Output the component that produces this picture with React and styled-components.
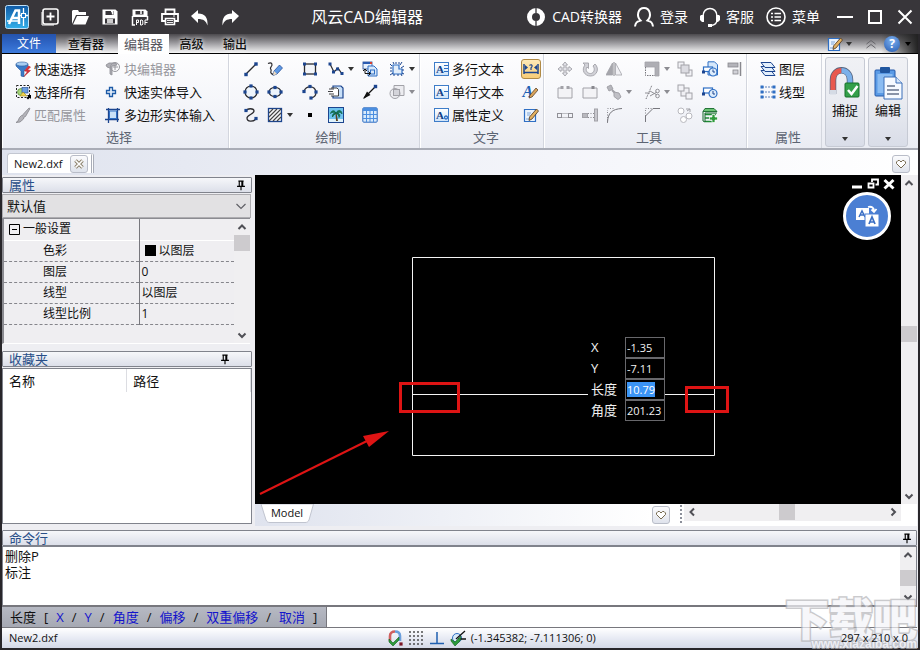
import React, { useEffect, useRef } from "react";
import styled, { createGlobalStyle } from "styled-components";

const GlobalStyle = createGlobalStyle`
  * {
    box-sizing: border-box;
  }
  body {
    margin: 0;
    background: #28262a;
    font-family: "Open Sans", "Noto Sans CJK SC", sans-serif;
    font-size: 13px;
    line-height: 16px;
    color: #111;
  }
  button,
  input,
  select {
    font: inherit;
    color: inherit;
    margin: 0;
    padding: 0;
    border: 0;
    background: none;
    border-radius: 0;
  }
  button {
    white-space: nowrap;
  }
  svg {
    display: block;
    flex: none;
  }
`;

/* ---------- icons ---------- */

const NAVY = "#1c458f";
const BLUE = "#2f6fc4";
const PALE = "#c9e0f8";
const INK = "#2c2c30";
const GREY = "#a2a2a8";
const MIST = "#e2e2e8";

const Glyph = ({ size = 16, box = 16, children }) => (
  <svg width={size} height={size} viewBox={`0 0 ${box} ${box}`} fill="none" aria-hidden="true">
    {children}
  </svg>
);

const Dots = ({ at, color = NAVY, r = 1.5 }) =>
  at.map(([x, y]) => (
    <rect key={`${x}-${y}`} x={x - r} y={y - r} width={r * 2} height={r * 2} fill={color} />
  ));

const ICONS = {
  funnel: (
    <>
      <path d="M1 3v2l5 5v5l3 1V10l4-5V3z" fill="#3a7ac8" stroke="#285a9c" strokeWidth=".6" />
      <ellipse cx="7" cy="3" rx="6" ry="2" fill="#a8cdf2" stroke="#285a9c" strokeWidth=".6" />
      <path d="M13.500 5l-4 5 3 .5L9 15.500l6.500-6-3-.5L15.500 6z" fill="#e0303a" stroke="#a8121c" strokeWidth=".5" />
    </>
  ),
  selectAll: (
    <>
      <rect x="1.500" y="1.500" width="13" height="12" stroke="#222" strokeDasharray="2 1.500" />
      <circle cx="6" cy="8" r="3.500" fill="#a8d47c" stroke="#3f7a1e" strokeWidth=".6" />
      <rect x="7" y="3.500" width="6" height="5.500" fill="#6b9fe0" stroke="#1c458f" strokeWidth=".6" />
      <path d="M5 12l3-4 4 4z" fill="#f2d54e" stroke="#a08a1a" strokeWidth=".6" />
      <path d="M12 11h4v4l-1.200-1.200L13 15.500 11.500 14l1.700-1.700z" fill="#000" />
    </>
  ),
  brush: (
    <path d="M15 1.500l-1-.5-6 6.500-.5 1.500-1-.5-2 2L3 14l-2 1.500 4-.5 3.500-3 .5-2 1.500-.5z" fill="#b4b4ba" stroke="#85858b" strokeWidth=".8" />
  ),
  blockEdit: (
    <>
      <path d="M1 4l3-2h7l1 2-5 1v9l-2-1V7L2 6z" fill="#b0b0b6" stroke="#8c8c92" strokeWidth=".8" />
      <circle cx="10" cy="6" r="4.500" stroke="#98989e" />
      <path d="M10 4v5M8 6h5" stroke="#98989e" />
    </>
  ),
  plus: (
    <path d="M4.500 3.500H7.500v3h3v3h-3v3h-3v-3h-3v-3h3z" fill="#e4effb" stroke="#1c5aa6" strokeWidth="1.300" />
  ),
  polygonImport: (
    <>
      <path d="M3.500 1v15M0 12.500h14M12.500 15V1M1 2.500h14" stroke={NAVY} strokeWidth="1.300" />
      <rect x="4.500" y="4" width="7" height="7.500" fill={PALE} stroke={BLUE} />
    </>
  ),
  line: (
    <>
      <path d="M3 13L13 3" stroke={INK} strokeWidth="1.300" />
      <Dots at={[[3, 13.5], [13, 3]]} r={1.7} />
    </>
  ),
  sketch: (
    <>
      <path d="M1 2.500c4-2 5 1 3 3.500-2 2 1 2 0 4-1 2 1 3.500 3 3.500" stroke={INK} strokeWidth="1.200" />
      <path d="M12.500 4l3 3-5.500 6-4 1.500L7 10z" fill="#5d98e4" stroke={NAVY} strokeWidth=".7" />
      <path d="M7 10l3 3-4 1.500z" fill="#f0dcc0" />
    </>
  ),
  rect: (
    <>
      <rect x="2.500" y="3" width="11" height="10" fill="#f2f5fa" stroke={INK} strokeWidth="1.300" />
      <Dots at={[[2.5, 3], [13.5, 3], [2.5, 13], [13.5, 13]]} />
    </>
  ),
  polyline: (
    <>
      <path d="M2 3l4 8 4-4 4 6" stroke={INK} strokeWidth="1.200" />
      <Dots at={[[2, 3], [5.5, 11], [9.5, 8], [14, 12.5]]} />
    </>
  ),
  insertBlock: (
    <>
      <rect x="1" y="1" width="9" height="7" fill="#e6f0fb" stroke={NAVY} strokeWidth=".8" />
      <path d="M1 2h9" stroke="#2a5ab0" strokeWidth="2" />
      <path d="M8 2h2" stroke="#d8402f" strokeWidth="2" />
      <path d="M6 5h6l3 3v7H6z" fill="#d8e8fa" stroke={BLUE} />
      <rect x="8.500" y="9" width="4" height="4" stroke={BLUE} />
      <path d="M3 9v3.500h5M1 10l2-2 2 2M6.500 10.500l2 2-2 2" stroke="#111" />
    </>
  ),
  boundary: (
    <>
      <path d="M4 4h6v4h3v5H4z" fill="#e3eefa" stroke={BLUE} strokeWidth="1.200" />
      <path d="M1 3l2 2M4 1l1 2M7 1v2M10 1v2M13 1l-2 3M15 5l-3 2M15 9h-2M15 13l-2-1M13 15l-1-2M9 15v-2M5 15v-2M1 14l3-2M1 10h2M1 7h2" stroke={NAVY} />
    </>
  ),
  circle: (
    <>
      <circle cx="8" cy="8" r="6" fill="#edf4fc" stroke={INK} strokeWidth="1.200" />
      <Dots at={[[8, 2], [8, 14], [2, 8], [14, 8]]} r={1.6} />
    </>
  ),
  ellipse: (
    <>
      <ellipse cx="8" cy="8" rx="6" ry="4.500" fill="#edf4fc" stroke={INK} strokeWidth="1.200" />
      <Dots at={[[8, 3.5], [8, 12.5], [2, 8], [14, 8]]} r={1.6} />
    </>
  ),
  arc: (
    <>
      <path d="M2 7.500C4 1 13 1.500 14 8c0 3-2 5.500-5 6" stroke={INK} strokeWidth="1.200" />
      <Dots at={[[2, 7.5], [8, 2.5], [14, 8], [9, 14]]} r={1.6} />
    </>
  ),
  copyPage: (
    <>
      <path d="M5 2h8l2 2v10H5z" fill={PALE} stroke={NAVY} strokeWidth="1.200" />
      <path d="M3 4h6l1.500 1.500V12H3" fill="#fff" stroke={INK} strokeWidth=".9" />
      <path d="M1 5h5M0 7.500h5M1 10h5" stroke={INK} strokeWidth=".9" />
    </>
  ),
  arrowLine: (
    <>
      <path d="M2 14L13 3" stroke="#111" strokeWidth="1.300" />
      <path d="M1 15l4-7.500 3.500 3.500z" fill="#111" />
      <Dots at={[[13.5, 2.5]]} r={1.7} />
    </>
  ),
  maskGrey: (
    <>
      <path d="M5 1.500h10v10H5z" fill="#ececf0" stroke={GREY} />
      <circle cx="6" cy="9.500" r="5" fill="#ececf0" stroke={GREY} />
      <rect x="4.500" y="5.500" width="6" height="6" fill="#d4d4da" stroke={GREY} />
    </>
  ),
  spline: (
    <>
      <path d="M3 4c1-3 8-3 8 0 0 3-7 4-7 7 0 4 6 4 9 1" stroke={INK} strokeWidth="1.300" />
      <Dots at={[[3, 3.5], [13, 11.5]]} r={1.6} />
    </>
  ),
  hatch: (
    <>
      <rect x="1.500" y="1.500" width="13" height="13" fill="#f8f8f8" stroke={NAVY} strokeWidth="1.300" />
      <path d="M2 6l4-4M2 10l8-8M2 14L14 2M6 14l8-8M10 14l4-4" stroke="#444" strokeWidth="1.100" />
    </>
  ),
  point: <rect x="6" y="6" width="4" height="4" fill="#000" />,
  picture: (
    <>
      <rect x=".5" y=".5" width="15" height="15" fill="#6fc3ee" stroke={NAVY} />
      <path d="M1 12h14v3H1z" fill="#dff2fb" />
      <path d="M7.500 6L8 14h2L8.500 6z" fill="#5b4220" />
      <path d="M8 6C6 2 3 4 2.500 6.500 4 5 6 5 8 6 5 6 4 8 4.500 10 5.500 8 7 7 8 6.500c2 .5 3 2 3 4C13 8 11 6 9 6c2-1 4-1 5 1C14 3 10 2 8 6z" fill="#147a55" stroke="#0b5c40" strokeWidth=".7" />
    </>
  ),
  table: (
    <>
      <rect x=".8" y=".8" width="14.400" height="14.400" rx="1" fill="#d8eafb" stroke="#2c6bc0" />
      <path d="M1 1h14v3H1z" fill="#4b8ee0" />
      <path d="M1 7.500h14M1 11.500h14M4.500 4v11M8 4v11M11.500 4v11" stroke="#4b8ee0" />
    </>
  ),
  move: (
    <path d="M8 1l2.500 3H9v3h3V5.500L15 8l-3 2.500V9H9v3h1.500L8 15l-2.500-3H7V9H4v1.500L1 8l3-2.500V7h3V4H5.500z" fill={MIST} stroke={GREY} strokeWidth=".9" />
  ),
  rotate: (
    <path d="M1 2h5.500v5.500L5 6c-2 3 0 6.500 3.500 6.500S13.500 8 11 5l2-2c5 5 1.500 12-4.500 12S-1 9 3 4z" fill="#d2d2d8" stroke={GREY} strokeWidth=".9" />
  ),
  mirror: (
    <>
      <path d="M6.500 2v12H0z" fill="#a6a6ac" stroke={GREY} strokeWidth=".8" />
      <path d="M9.500 2v12H16z" fill="#f0f0f4" stroke={GREY} strokeWidth=".8" />
      <path d="M8 1v14" stroke="#88888e" />
    </>
  ),
  scale: (
    <>
      <path d="M1 1h14v14h-4V6H1z" fill="#aeaeb4" stroke={GREY} strokeWidth=".8" />
      <path d="M1.500 6v8.500H11" stroke="#77777d" strokeDasharray="1.500 1" />
    </>
  ),
  stackA: (
    <>
      <rect x="1" y="1" width="6" height="6" fill="#f2f2f6" stroke={GREY} />
      <rect x="9" y="9" width="6" height="6" fill="#f2f2f6" stroke={GREY} />
      <rect x="4" y="4" width="8" height="8" fill="#dcdce2" stroke={GREY} />
    </>
  ),
  stackB: (
    <>
      <rect x="4" y="4" width="8" height="8" fill="#f0f0f4" stroke={GREY} />
      <rect x="1" y="1" width="6" height="6" fill="#f2f2f6" stroke={GREY} />
      <rect x="9" y="9" width="6" height="6" fill="#f2f2f6" stroke={GREY} />
    </>
  ),
  docClock: (
    <>
      <path d="M6 .8h6.500l3 3V14H6z" fill="#d5e7fa" stroke={BLUE} />
      <rect x="1.500" y="6" width="9" height="4.500" fill="#fff" stroke={BLUE} strokeWidth="1.200" />
      <circle cx="11" cy="11" r="4" fill="#deedfc" stroke={BLUE} strokeWidth="1.200" />
      <path d="M11 8.500V11h2" stroke={NAVY} />
      <Dots at={[[1.5, 11]]} />
    </>
  ),
  rectClock: (
    <>
      <rect x="1.500" y="4" width="9" height="5" fill="#fff" stroke={BLUE} strokeWidth="1.200" />
      <circle cx="11" cy="9.500" r="4" fill="#deedfc" stroke={BLUE} strokeWidth="1.200" />
      <path d="M11 7v3h2" stroke={NAVY} />
      <Dots at={[[1.5, 10]]} />
    </>
  ),
  alignRight: (
    <>
      <rect x="1" y="2" width="10" height="4" fill="#b4b4ba" stroke="#88888e" strokeWidth=".8" />
      <rect x="6" y="9" width="5" height="4" fill="#d2d2d8" stroke="#88888e" strokeWidth=".8" />
      <path d="M13.500 1v14" stroke="#88888e" strokeWidth="1.500" />
    </>
  ),
  breakOpen: (
    <>
      <path d="M4 4H1v10h14V4h-3" fill="#f3f3f6" stroke={GREY} />
      <Dots at={[[5, 3.5], [11, 3.5]]} color={GREY} />
    </>
  ),
  breakClosed: (
    <>
      <path d="M1 4h14v10H1z" fill="#f3f3f6" stroke={GREY} />
      <Dots at={[[11, 3.5]]} color="#88888e" />
    </>
  ),
  explode: (
    <>
      <path d="M1 3l4-2 2 4-4 2z" fill="#b6b6bc" stroke={GREY} />
      <path d="M6 6l3 3" stroke={GREY} strokeWidth="2" />
      <path d="M8 8l5 1 2 4-3 2.500-4-3z" fill="#c0c0c6" stroke={GREY} />
    </>
  ),
  trim: (
    <>
      <path d="M2 15L8 1" stroke="#77777d" strokeDasharray="1.500 1" />
      <path d="M1 9h5M6 7l7 4M6 12l7-4" stroke="#909096" />
      <circle cx="13.500" cy="7" r="1.800" stroke="#909096" />
      <circle cx="13.500" cy="12" r="1.800" stroke="#909096" />
    </>
  ),
  stretch: (
    <>
      <rect x=".5" y="6.500" width="4" height="4" stroke="#909096" />
      <rect x="11.500" y="6.500" width="4" height="4" stroke="#909096" />
      <path d="M5.500 6.500h5M5.500 10.500h5" stroke="#88888e" strokeDasharray="1 1" />
    </>
  ),
  extend: (
    <>
      <rect x=".5" y="6.500" width="5" height="4" fill="#b8b8be" stroke={GREY} />
      <path d="M6 6.500h6M6 10.500h6" stroke="#88888e" strokeDasharray="1 1.500" />
      <rect x="12.500" y="2" width="3" height="12" fill="#c8c8ce" stroke={GREY} />
    </>
  ),
  fillet: (
    <>
      <path d="M1.500 16V3M1.500 1.500H8" stroke="#88888e" strokeDasharray="1 1.500" />
      <path d="M1.500 15C2 6 6 2 16 1.500" stroke="#77777d" />
    </>
  ),
  chamfer: (
    <>
      <path d="M1.500 9V1.500H9" stroke="#88888e" strokeDasharray="1 1.500" />
      <path d="M1.500 15V9L9 1.500h7" stroke="#77777d" />
    </>
  ),
  replace: (
    <>
      <circle cx="4" cy="4" r="3" fill="#fff" stroke="#b8b8be" />
      <circle cx="12" cy="9" r="3" fill="#fff" stroke="#b8b8be" />
      <circle cx="6.500" cy="12.500" r="3" fill="#fff" stroke="#b8b8be" />
      <path d="M9 2h4v3M13 2l-3 2" stroke={GREY} />
    </>
  ),
  layerAdd: (
    <>
      <path d="M1 4.500l2-3h9l3 3z" fill="#6cc474" stroke="#15682a" strokeWidth=".9" />
      <path d="M3 7.500h11M3 11h8M3 14.500h8" stroke="#1d8a34" strokeWidth="1.500" />
      <path d="M1 4.500v9.500l2 1V6h12" stroke="#15682a" />
      <path d="M10 7.500h3V10h2.500v3H13v2.500h-3V13H7.500v-3H10z" fill="#2f9a3c" stroke="#fff" strokeWidth=".7" />
    </>
  ),
  layers: (
    <>
      <path d="M1 9.500h10l4 5H5z" fill="#e3effc" stroke={NAVY} />
      <path d="M1 5.500h10l4 5H5z" fill="#e3effc" stroke={NAVY} />
      <path d="M1 1.500h10l4 5H5z" fill="#e3effc" stroke={NAVY} />
    </>
  ),
  linetype: (
    <>
      <path d="M2 3h12M2 8h12M2 13h12" stroke="#5a7fb8" strokeDasharray="2 1" />
      <Dots at={[[2, 3], [14, 3], [2, 8], [14, 8], [2, 13], [14, 13]]} color={BLUE} />
    </>
  ),
  dimension: (
    <>
      <path d="M1 3v10M15 3v10M1 11.500h14" stroke={NAVY} strokeWidth="1.500" />
      <path d="M2 4v5l3-2.500zM14 4v5l-3-2.500z" fill={NAVY} />
      <path d="M6.500 4.500C8 3 9.500 4 9 5.500L8 7v2" stroke={NAVY} strokeWidth="1.200" />
    </>
  ),
  penNote: (
    <>
      <path d="M1.500 2.500h11v12h-11z" fill="#eaf3fd" stroke={BLUE} strokeWidth="1.200" />
      <path d="M4 6h4M4 8h3M3 12h5" stroke="#7fa6d8" />
      <path d="M13.500 2L15.500 4 9 12l-3 1.500.5-3.500z" fill="#e2b060" stroke="#4a3520" strokeWidth=".8" />
    </>
  ),
  grid: (
    <Dots at={[2, 6, 10, 14].flatMap(x => [2, 6, 10, 14].map(y => [x, y]))} color="#333" r={0.8} />
  ),
  ortho: <path d="M8 2v11M1 13.500h14" stroke="#1f5fb0" strokeWidth="1.500" />,
  snapDot: (
    <>
      <path d="M3 11V6c0-3 2-4.500 5-4.500" stroke="#d06060" strokeWidth="2.600" />
      <path d="M8 1.500c3 0 5 1.500 5 4.500v5" stroke="#6b9fdc" strokeWidth="2.600" />
      <path d="M2 9l4 4 6-6v3l-6 6-4-4z" fill="#2d9a3a" stroke="#116020" strokeWidth=".6" />
      <Dots at={[[14, 14]]} color="#7a1626" r={1.6} />
    </>
  ),
  track: (
    <>
      <circle cx="7" cy="8" r="4.500" fill="#d7eafa" stroke={BLUE} />
      <path d="M15 1L6 9M8 9h8" stroke="#111" strokeWidth="1.300" />
      <path d="M1 9l4 3 6-6-1 5-5 5-4-5z" fill="#2d9a3a" stroke="#116020" strokeWidth=".6" />
    </>
  ),
  pin: (
    <path d="M5 3.500h6M6 3.500v6M10 3.500v6M9 3.500v6M3.500 9.500h9M8 10v4" stroke="#000" strokeWidth="1.300" />
  ),
  heart: (
    <path d="M8 12L3.500 7.500V6l1.500-1.500h1.500L8 6l1.500-1.500H11L12.500 6v1.500z" fill="#fff" stroke="#766a50" />
  ),
  up: <path d="M4.500 10L8 6.500l3.500 3.500" stroke="#505056" strokeWidth="2" />,
  down: <path d="M4.500 6.500L8 10l3.500-3.500" stroke="#505056" strokeWidth="2" />,
  left: <path d="M10 4.500L6.500 8l3.500 3.500" stroke="#505056" strokeWidth="2" />,
  right: <path d="M6.500 4.500L10 8l-3.500 3.500" stroke="#505056" strokeWidth="2" />,
  thinDown: <path d="M3.500 6L8 10.500 12.500 6" stroke="#606066" strokeWidth="1.200" />
};

const Icon = ({ name, size }) => <Glyph size={size}>{ICONS[name]}</Glyph>;

const Caret = ({ color = "#333" }) => (
  <svg width="8" height="4" viewBox="0 0 8 4" aria-hidden="true">
    <path d="M1 0h6L4 4z" fill={color} />
  </svg>
);

/* letter tiles used by the text commands */
const TileLetter = styled.span`
  display: flex;
  align-items: center;
  width: 15px;
  height: 14px;
  padding-left: 1px;
  border: 1px solid #3d7cc8;
  background: linear-gradient(#fff, #cfe3f8);
  color: #123f86;
  font-family: "Liberation Serif", serif;
  font-weight: bold;
  font-size: 11px;
  line-height: 12px;
`;

const LetterTile = ({ kind }) => (
  <TileLetter aria-hidden="true">
    A
    <svg width="4" height="10" viewBox="0 0 4 10">
      {kind === "multi" && <path d="M0 1.500h4M0 4.500h4M0 7.500h4" stroke={BLUE} />}
      {kind === "single" && <path d="M0 4.500h4" stroke={BLUE} />}
      {kind === "gear" && (
        <circle cx="2" cy="7.500" r="1.500" fill="none" stroke={BLUE} strokeWidth="1.300" />
      )}
    </svg>
  </TileLetter>
);

const PenLetterBox = styled.span`
  display: flex;
  align-items: center;
  width: 17px;
  height: 16px;
  color: #2260b4;
  font-family: "Liberation Serif", serif;
  font-style: italic;
  font-weight: bold;
  font-size: 16px;
  svg {
    margin-left: -5px;
  }
`;

const PenLetter = () => (
  <PenLetterBox aria-hidden="true">
    A
    <svg width="10" height="14" viewBox="0 0 10 14">
      <path d="M8 3l2 2-6 7-3 1 1-3z" fill="#d8a25a" stroke="#4a3520" strokeWidth=".7" />
    </svg>
  </PenLetterBox>
);

/* ---------- window frame ---------- */

const Window = styled.div`
  display: flex;
  flex-direction: column;
  min-height: 100vh;
  padding-bottom: 2px;
  background: #28262a;
`;

const Frame = styled.div`
  display: flex;
  flex-direction: column;
  flex: 1;
  margin: 0 2px;
  background: #eeeef2;
`;

const TitleBar = styled.header`
  display: flex;
  align-items: center;
  height: 34px;
  padding: 0 6px 0 5px;
  background: #38363a;
  color: #fff;
`;

const QuickBar = styled.div`
  display: flex;
  align-items: center;
  gap: 12px;
`;

const TitleButton = styled.button`
  display: flex;
  align-items: center;
  justify-content: center;
  gap: 6px;
  min-width: 18px;
  font-size: 14px;
  line-height: 20px;
`;

const Spacer = styled.div`
  flex: ${p => p.$grow || 1};
`;

const AppTitle = styled.h1`
  margin: 0;
  font-size: 16px;
  font-weight: normal;
  line-height: 24px;
  white-space: nowrap;
`;

const AccountBar = styled.div`
  display: flex;
  align-items: center;
  gap: 12px;
`;

const WindowBar = styled.div`
  display: flex;
  align-items: center;
  gap: 12px;
  margin-left: 16px;
`;

const Logo = () => (
  <svg width="24" height="24" viewBox="0 0 24 24" aria-hidden="true">
    <defs>
      <linearGradient id="logo" x2="0" y2="1">
        <stop offset="0" stopColor="#0f5aa6" />
        <stop offset="1" stopColor="#35b0ea" />
      </linearGradient>
    </defs>
    <rect x=".5" y=".5" width="23" height="23" rx="2" fill="url(#logo)" stroke="#bfe0f8" />
    <path d="M4 19L10.500 5.500h3.500V19M7 13h7" fill="none" stroke="#fff" strokeWidth="2.500" />
    <path d="M2 16h12M18.500 3v18M13 10.500h10" fill="none" stroke="#fff" strokeWidth="1.300" />
    <rect x="16.500" y="8.500" width="4" height="4" fill="#1c78c8" stroke="#fff" />
  </svg>
);

const QUICK = [
  ["新建", (
    <>
      <rect x="2" y="1" width="15" height="15" rx="2" fill="#38363a" stroke="#fff" strokeWidth="1.600" />
      <path d="M1 4v13h12" stroke="#fff" />
      <path d="M9.500 4.500v8M5.500 8.500h8" stroke="#fff" strokeWidth="1.800" />
    </>
  )],
  ["打开", <path d="M1 16V3l1-1h5l1 2h7v3H5zM2 16.500L6 8h12l-3.500 8.500z" fill="#fff" />],
  ["保存", (
    <>
      <path d="M1.500 1.500h13l2 2v13h-15z" fill="#fff" />
      <path d="M4.500 3h8v4h-8zM4 10.500h10v5H4z" fill="#38363a" />
      <path d="M10 3.500h1.500v3M6 12h6M6 14h6" stroke="#fff" strokeWidth="1.300" />
    </>
  )],
  ["保存为PDF", (
    <>
      <path d="M1.500 1.500h13l2 2V9h-15z" fill="#fff" />
      <path d="M4.500 3h8v3.500h-8z" fill="#38363a" />
      <path d="M10 3v3M1.500 8v9H4M16.500 8v4" stroke="#fff" strokeWidth="1.500" />
      <path d="M5.500 17v-5h2v2.500h-2M9.500 12h1.500l.8 1v3l-.8 1H9.500zM14 17v-5h3M14 14.500h2.500" stroke="#fff" />
    </>
  )],
  ["打印", (
    <>
      <path d="M4.500 6V1.500h9V6M4.500 13H1V6h16v7h-3.500" stroke="#fff" strokeWidth="1.800" />
      <path d="M4.500 10.500h9v6h-9z" stroke="#fff" strokeWidth="1.600" />
      <path d="M6 12.500h6M6 14.500h6M12 8h2" stroke="#fff" strokeWidth=".9" />
    </>
  )],
  ["撤销", <path d="M0 8l7-6v3.500c7 0 10 4 9.500 12-1.500-4.500-4-6.500-9.500-6.500V15z" fill="#fff" />],
  ["重做", <path d="M18 8l-7-6v3.500C4 5.500 1 9.500 1.500 17.500 3 13 5.500 11 11 11v4z" fill="#fff" />]
];

const ACCOUNT = [
  ["CAD转换器", (
    <>
      <circle cx="10" cy="10" r="6.500" stroke="#fff" strokeWidth="5" />
      <path d="M10 0v6M10 14v6" stroke="#38363a" strokeWidth="1.300" />
    </>
  )],
  ["登录", (
    <path d="M1 19.500c.5-4 2-5 5.500-6C2 9 4 1 10 1s8 8 3.500 12.500c3.500 1 5 2 5.500 6" stroke="#fff" strokeWidth="2" />
  )],
  ["客服", (
    <>
      <path d="M3 9C3-1 17-1 17 9M17 13c0 3-2 5-6 5.500" stroke="#fff" strokeWidth="1.400" />
      <path d="M1 8h3v7H2L0 13v-4zM19 8h-3v7h2l2-2v-4zM8 17h4v3H8z" fill="#fff" />
    </>
  )],
  ["菜单", (
    <>
      <circle cx="10" cy="10" r="9" stroke="#fff" strokeWidth="1.600" />
      <path d="M5 6.500h2M5 10h2M5 13.500h2M8.500 6.500H15M8.500 10H15M8.500 13.500H15" stroke="#fff" strokeWidth="1.600" />
    </>
  )]
];

const Title = () => (
  <TitleBar>
    <QuickBar>
      <Logo />
      {QUICK.map(([label, art]) => (
        <TitleButton key={label} aria-label={label}>
          <Glyph size={18} box={18}>{art}</Glyph>
        </TitleButton>
      ))}
    </QuickBar>
    <Spacer $grow={7} />
    <AppTitle>风云CAD编辑器</AppTitle>
    <Spacer $grow={10} />
    <AccountBar>
      {ACCOUNT.map(([label, art]) => (
        <TitleButton key={label}>
          <Glyph size={20} box={20}>{art}</Glyph>
          {label}
        </TitleButton>
      ))}
    </AccountBar>
    <WindowBar>
      <TitleButton aria-label="最小化">
        <Glyph><path d="M0 8h16" stroke="#fff" strokeWidth="2" /></Glyph>
      </TitleButton>
      <TitleButton aria-label="最大化">
        <Glyph><rect x="2" y="2" width="12" height="12" stroke="#fff" strokeWidth="2" /></Glyph>
      </TitleButton>
      <TitleButton aria-label="关闭">
        <Glyph><path d="M1.500 1.500l13 13M14.500 1.500l-13 13" stroke="#fff" strokeWidth="2" /></Glyph>
      </TitleButton>
    </WindowBar>
  </TitleBar>
);

/* ---------- ribbon ---------- */

const TabBar = styled.nav`
  display: flex;
  align-items: stretch;
  height: 20px;
  background: linear-gradient(#000, #000) bottom / 100% 1px no-repeat,
    linear-gradient(#4c4a4e, #a4a3a7 50%, #fff);
`;

const Tab = styled.button`
  width: ${p => p.$width}px;
  font-size: 12px;
  line-height: 19px;
  font-weight: 500;
  text-shadow: 0 0 4px #fff;
  ${p =>
    p.$kind === "file" &&
    `
    height: 19px;
    color: #fff;
    font-weight: normal;
    text-shadow: none;
    background: linear-gradient(#2553ac, #2f66c6 50%, #3d7bdc);
  `}
  ${p =>
    p.$kind === "active" &&
    `
    margin-left: 2px;
    font-size: 13px;
    font-weight: normal;
    color: #55555c;
    background: #fff;
  `}
`;

const TabTools = styled.div`
  display: flex;
  align-items: center;
  gap: 4px;
  margin-left: auto;
  height: 19px;
`;

const TabTool = styled.button`
  display: flex;
  align-items: center;
  gap: 2px;
  height: 19px;
`;

const StyleTool = styled(TabTool)`
  margin-right: 8px;
`;

const HelpTool = styled(TabTool)`
  padding: 0 6px 0 3px;
  gap: 4px;
  background: linear-gradient(90deg, #77767a00, #222);
`;

const HelpMark = styled.span`
  width: 16px;
  height: 16px;
  border-radius: 50%;
  background: radial-gradient(circle at 50% 30%, #7eb2f0, #2459b0);
  color: #fff;
  font-weight: bold;
  font-size: 12px;
  line-height: 16px;
`;

const Ribbon = styled.div`
  display: flex;
  height: 96px;
  border-bottom: 2px solid #a9acb6;
  background: linear-gradient(#fdfdfe, #f5f6fa 50%, #eaecf3);
`;

const GroupBox = styled.section`
  display: flex;
  flex-direction: column;
  flex: none;
  width: ${p => p.$width}px;
  padding: 3px 0 0 ${p => p.$inset}px;
  border-right: 1px solid #d3d6de;
  box-shadow: inset 1px 0 #fff;
`;

const GroupGrid = styled.div`
  display: grid;
  grid-template-columns: ${p => p.$columns};
  grid-auto-rows: 23px;
  align-items: center;
`;

const GroupLabel = styled.h2`
  margin: 0;
  padding-right: 5px;
  font-size: 13px;
  font-weight: normal;
  line-height: 22px;
  text-align: center;
  color: #5c6472;
`;

const Command = styled.button`
  display: flex;
  align-items: center;
  justify-self: start;
  gap: 3px;
  height: 22px;
  font-size: 13px;
  grid-column: ${p => p.$column || "auto"};
  &:disabled {
    color: #97979d;
  }
`;

const ActiveCommand = styled(Command)`
  justify-content: center;
  width: 20px;
  height: 20px;
  border: 1px solid #b08a45;
  border-radius: 3px;
  background: linear-gradient(#fde9b8, #f8cd77);
`;

const SideCommand = styled(Command)`
  justify-content: center;
  width: 20px;
`;

const Group = ({ label, width, inset, columns, children }) => (
  <GroupBox $width={width} $inset={inset}>
    <GroupGrid $columns={columns}>{children}</GroupGrid>
    <GroupLabel>{label}</GroupLabel>
  </GroupBox>
);

const Tool = ({ icon, label, menu, muted, column }) => (
  <Command aria-label={label} title={label} $column={column}>
    <Icon name={icon} />
    {menu && <Caret color={muted ? "#8c8c92" : "#333"} />}
  </Command>
);

// icon, name, column, has a menu
const DRAW_TOOLS = [
  ["line", "直线", 1], ["sketch", "徒手画", 2], ["rect", "矩形", 3], ["polyline", "多段线", 4, true],
  ["insertBlock", "插入块", 5], ["boundary", "边界", 6, true],
  ["circle", "圆", 1], ["ellipse", "椭圆", 2], ["arc", "圆弧", 3], ["copyPage", "外部参照", 4],
  ["arrowLine", "引线", 5], ["maskGrey", "遮罩", 6, true],
  ["spline", "样条曲线", 1], ["hatch", "填充", 2, true], ["point", "点", 3], ["picture", "图像", 4],
  ["table", "表格", 5]
];

const EDIT_TOOLS = [
  ["move", "移动", 1], ["rotate", "旋转", 2], ["mirror", "镜像", 3], ["scale", "缩放", 4, true],
  ["stackA", "前置", 5], ["docClock", "复制格式", 6], ["alignRight", "对齐", 7],
  ["breakOpen", "打断", 1], ["breakClosed", "打断于点", 2], ["explode", "分解", 3, true],
  ["trim", "修剪", 4, true], ["stackB", "后置", 5], ["rectClock", "更新", 6],
  ["stretch", "拉伸", 1], ["extend", "延伸", 2], ["fillet", "圆角", 3], ["chamfer", "倒角", 4],
  ["replace", "替换", 5], ["layerAdd", "添加图层", 6]
];

const BigButton = styled.button`
  display: flex;
  flex-direction: column;
  align-items: center;
  width: 40px;
  height: 90px;
  margin: 3px 0 0 3px;
  padding: 8px 0 5px;
  border: 1px solid #c6cad4;
  border-radius: 3px;
  background: linear-gradient(#f0f1f5, #e9ebf1 50%, #d9dde8);
  font-size: 13px;
  line-height: 20px;
  svg:last-child {
    margin-top: auto;
  }
`;

const RibbonBar = () => (
  <Ribbon>
    <Group label="选择" width={227} inset={13} columns="90px auto">
      <Command><Icon name="funnel" />快速选择</Command>
      <Command disabled><Icon name="blockEdit" />块编辑器</Command>
      <Command><Icon name="selectAll" />选择所有</Command>
      <Command><Icon name="plus" />快速实体导入</Command>
      <Command disabled><Icon name="brush" />匹配属性</Command>
      <Command><Icon name="polygonImport" />多边形实体输入</Command>
    </Group>
    <Group label="绘制" width={191} inset={14} columns="24px 35px 26px 34px 27px 27px">
      {DRAW_TOOLS.map(([icon, label, column, menu]) => (
        <Tool key={icon} icon={icon} label={label} column={column} menu={menu} muted={icon === "maskGrey"} />
      ))}
    </Group>
    <Group label="文字" width={124} inset={14} columns="87px 20px">
      <Command><LetterTile kind="multi" />多行文本</Command>
      <ActiveCommand aria-label="标注"><Icon name="dimension" /></ActiveCommand>
      <Command><LetterTile kind="single" />单行文本</Command>
      <SideCommand aria-label="文字样式"><PenLetter /></SideCommand>
      <Command><LetterTile kind="gear" />属性定义</Command>
      <SideCommand aria-label="编辑文字"><Icon name="penNote" /></SideCommand>
    </Group>
    <Group label="工具" width={203} inset={13} columns="25px 24px 38px 33px 25px 25px 18px">
      {EDIT_TOOLS.map(([icon, label, column, menu]) => (
        <Tool key={icon} icon={icon} label={label} column={column} menu={menu} muted />
      ))}
    </Group>
    <Group label="属性" width={75} inset={13} columns="auto">
      <Command><Icon name="layers" />图层</Command>
      <Command><Icon name="linetype" />线型</Command>
      <span />
    </Group>
    <BigButton>
      <svg width="32" height="34" viewBox="0 0 32 34" aria-hidden="true">
        <path d="M4 28V14c0-13 17-13 17 0v10" fill="none" stroke="#54627c" strokeWidth="6.500" />
        <path d="M4 24V14C4 8 8 4.500 12.500 4.500" fill="none" stroke="#e8584f" strokeWidth="5" />
        <path d="M12.500 4.500C17 4.500 21 8 21 14v10" fill="none" stroke="#7bb0ea" strokeWidth="5" />
        <path d="M1 24h6v4.500H1z" fill="#d5dbe5" />
        <rect x="16" y="17" width="14" height="14" rx="1" fill="#35a04a" stroke="#157028" />
        <path d="M19 24l3.500 4 6-8" fill="none" stroke="#fff" strokeWidth="2.500" />
      </svg>
      捕捉
      <Caret />
    </BigButton>
    <BigButton>
      <svg width="32" height="34" viewBox="0 0 32 34" aria-hidden="true">
        <rect x="3" y="4" width="20" height="26" rx="1" fill="#5a9be6" stroke="#2458a8" />
        <rect x="5.500" y="8" width="15" height="19" fill="#8abcf2" />
        <rect x="8" y="1" width="10" height="6" rx="1" fill="#20569f" />
        <path d="M12 11h12l6 6v16H12z" fill="#f6faff" stroke="#3b6fb8" />
        <path d="M24 11v6h6" fill="#d5e6fa" stroke="#3b6fb8" />
        <path d="M15 20h8M15 24h12M15 28h12" stroke="#66738c" strokeWidth="1.500" />
      </svg>
      编辑
      <Caret />
    </BigButton>
  </Ribbon>
);

const RibbonTabs = () => (
  <TabBar>
    <Tab $kind="file" $width={54}>文件</Tab>
    <Tab $width={60}>查看器</Tab>
    <Tab $kind="active" $width={51}>编辑器</Tab>
    <Tab $width={45}>高级</Tab>
    <Tab $width={42}>输出</Tab>
    <TabTools>
      <StyleTool aria-label="样式"><Icon name="penNote" /><Caret /></StyleTool>
      <TabTool aria-label="收起功能区">
        <svg width="12" height="10" viewBox="0 0 12 10" fill="none" aria-hidden="true">
          <path d="M1.500 5L6 1.500 10.500 5M1.500 9L6 5.500 10.500 9" stroke="#66656a" />
        </svg>
      </TabTool>
      <HelpTool aria-label="帮助"><HelpMark>?</HelpMark><Caret color="#000" /></HelpTool>
    </TabTools>
  </TabBar>
);

/* ---------- document tabs ---------- */

const DocBar = styled.div`
  display: flex;
  align-items: flex-end;
  height: 25px;
  padding: 0 8px 2px 5px;
  background: linear-gradient(90deg, #dfe3ee, #f4f5fa 60%, #fff);
`;

const DocTab = styled.div`
  display: flex;
  align-items: center;
  gap: 8px;
  height: 20px;
  padding: 0 3px 0 6px;
  border: 1px solid #c3c7d1;
  border-bottom: 0;
  border-right: 3px double #a9adb8;
  border-radius: 3px 3px 0 0;
  background: #fff;
  font-size: 11px;
`;

const SmallButton = styled.button`
  display: flex;
  align-items: center;
  justify-content: center;
  width: 18px;
  height: 18px;
  border: 1px solid #b9bdc8;
  border-radius: 3px;
  background: linear-gradient(#fbfbfd, #dfe3ec);
`;

/* ---------- scroll bars ---------- */

const Scroll = styled.div`
  display: flex;
  flex: none;
  flex-direction: ${p => (p.$across ? "row" : "column")};
  ${p => (p.$across ? "height: 17px;" : "width: 16px;")}
  background: #f0eff1;
`;

const ScrollButton = styled.button`
  display: flex;
  align-items: center;
  justify-content: center;
  flex: none;
  width: 16px;
  height: 16px;
`;

const Thumb = styled.div`
  flex: none;
  width: 16px;
  height: 16px;
  background: #cdcbce;
`;

const ScrollBar = ({ across, before, after }) => (
  <Scroll $across={across}>
    <ScrollButton aria-label={across ? "向左" : "向上"} tabIndex={-1}>
      <Icon name={across ? "left" : "up"} />
    </ScrollButton>
    {before > 0 && <Spacer $grow={before} />}
    <Thumb />
    <Spacer $grow={after} />
    <ScrollButton aria-label={across ? "向右" : "向下"} tabIndex={-1}>
      <Icon name={across ? "right" : "down"} />
    </ScrollButton>
  </Scroll>
);

/* ---------- side panels ---------- */

const Workspace = styled.main`
  display: flex;
  flex: 1;
  padding-right: 1px;
`;

const Side = styled.aside`
  display: flex;
  flex-direction: column;
  flex: none;
  width: 253px;
  padding: 2px 3px 2px 0;
`;

const PanelHead = styled.div`
  display: flex;
  align-items: center;
  justify-content: space-between;
  height: 16px;
  padding: 0 ${p => p.$end || 2}px 0 6px;
  margin-top: ${p => p.$gap || 0}px;
  border: 1px solid #80838c;
  border-radius: 1px;
  background: linear-gradient(#f6f7fa, #dcdfe9);
`;

const PanelTitle = styled.h3`
  margin: 0;
  font-size: 13px;
  font-weight: normal;
  line-height: 14px;
  color: #294f88;
`;

const PinButton = styled.button`
  display: flex;
`;

const Panel = ({ title, end, gap }) => (
  <PanelHead $end={end} $gap={gap}>
    <PanelTitle>{title}</PanelTitle>
    <PinButton aria-label="固定"><Icon name="pin" size={14} /></PinButton>
  </PanelHead>
);

const SelectBox = styled.label`
  display: grid;
  grid-template-columns: 1fr 16px;
  align-items: center;
  height: 24px;
  margin: 1px 1px 0 0;
  padding: 0 1px 0 4px;
  border: 1px solid #adacb0;
  background: #e2e1e3;
  select {
    grid-area: 1 / 1 / 2 / 3;
    height: 22px;
    appearance: none;
    outline: none;
    font-size: 13px;
  }
  svg {
    grid-area: 1 / 2;
    pointer-events: none;
  }
`;

const PropertyBox = styled.div`
  display: flex;
  height: 126px;
  margin-right: 2px;
  border-left: 2px solid #8b8b91;
  border-top: 1px solid #8b8b91;
  border-bottom: 1px solid #fff;
  background: #efeef1;
`;

const PropertyTable = styled.table`
  flex: 1;
  align-self: flex-start;
  border-collapse: collapse;
  table-layout: fixed;
  font-size: 12px;
  tr {
    height: 21px;
    border-bottom: 1px dashed #85858b;
  }
  tr:first-child {
    border-bottom: 1px solid #fff;
  }
  th,
  td {
    padding: 0 0 0 2px;
    font-weight: normal;
    text-align: left;
    line-height: 16px;
  }
  th {
    width: 135px;
    padding-left: 39px;
    border-right: 1px solid #77777d;
  }
  tr:first-child th {
    padding-left: 5px;
  }
`;

const Fold = styled.button`
  display: inline-flex;
  align-items: center;
  gap: 3px;
  vertical-align: top;
`;

const Swatch = styled.span`
  display: inline-block;
  width: 11px;
  height: 11px;
  margin: 0 3px 0 3px;
  vertical-align: -1px;
  background: #000;
`;

const PROPERTIES = [["图层", "0"], ["线型", "以图层"], ["线型比例", "1"]];

const Favourites = styled.div`
  flex: 1;
  margin-top: 1px;
  border: 1px solid #80838c;
  background: #fff;
`;

const FavouriteTable = styled.table`
  width: 100%;
  border-collapse: collapse;
  table-layout: fixed;
  th {
    height: 23px;
    padding: 0 0 0 6px;
    border-right: 1px solid #dcdde2;
    font-weight: normal;
    font-size: 13px;
    text-align: left;
  }
`;

const SidePanels = () => (
  <Side>
    <Panel title="属性" end={3} />
    <SelectBox>
      <select defaultValue="默认值" aria-label="默认值">
        <option>默认值</option>
      </select>
      <Icon name="thinDown" />
    </SelectBox>
    <PropertyBox>
      <PropertyTable>
        <tbody>
          <tr>
            <th scope="row">
              <Fold aria-expanded="true">
                <svg width="11" height="11" viewBox="0 0 11 11" fill="none" aria-hidden="true">
                  <path d="M.5.5h10v10H.5zM3 5.500h5" stroke="#000" />
                </svg>
                一般设置
              </Fold>
            </th>
            <td />
          </tr>
          <tr>
            <th scope="row">色彩</th>
            <td><Swatch />以图层</td>
          </tr>
          {PROPERTIES.map(([name, value]) => (
            <tr key={name}>
              <th scope="row">{name}</th>
              <td>{value}</td>
            </tr>
          ))}
        </tbody>
      </PropertyTable>
      <ScrollBar after={1} />
    </PropertyBox>
    <Panel title="收藏夹" end={19} gap={7} />
    <Favourites>
      <FavouriteTable>
        <thead>
          <tr>
            <th scope="col">名称</th>
            <th scope="col">路径</th>
          </tr>
        </thead>
      </FavouriteTable>
    </Favourites>
  </Side>
);

/* ---------- drawing area ---------- */

const Drawing = styled.section`
  display: flex;
  flex-direction: column;
  flex: 1;
  min-width: 0;
`;

const DrawingRow = styled.div`
  display: flex;
  flex: 1;
`;

const Canvas = styled.div`
  position: relative;
  flex: 1;
  min-height: 328px;
  overflow: hidden;
  background: #000;
`;

const Sheet = styled.svg`
  position: absolute;
  top: 0;
  left: 0;
`;

const CoordForm = styled.form`
  position: absolute;
  top: 162px;
  left: 333px;
  display: grid;
  grid-template-columns: 37px 40px;
  grid-auto-rows: 21px;
  background: #000;
  color: #f2f2f2;
  font-size: 13px;
  line-height: 20px;
  label {
    padding-left: 3px;
  }
  input {
    width: 40px;
    min-width: 0;
    height: 21px;
    padding: 0 1px;
    border: 1px solid #68686c;
    outline: none;
    font-size: 11px;
  }
  input::selection {
    color: #fff;
    background: #3b94f5;
  }
`;

const ChildControls = styled.div`
  position: absolute;
  top: 3px;
  right: 6px;
  display: flex;
  gap: 4px;
`;

const ChildButton = styled.button`
  display: flex;
`;

const TranslateButton = styled.button`
  position: absolute;
  top: 17px;
  right: 10px;
  display: flex;
  align-items: center;
  justify-content: center;
  width: 48px;
  height: 48px;
  border: 3px solid #fff;
  border-radius: 50%;
  background: #4b7fd3;
`;

const COORDS = [["X", "-1.35"], ["Y", "-7.11"], ["长度", "10.79"], ["角度", "201.23"]];

const CoordInputs = () => {
  const lengthRef = useRef(null);

  useEffect(() => {
    lengthRef.current.focus();
    lengthRef.current.select();
  }, []);

  return (
    <CoordForm>
      {COORDS.map(([name, value]) => (
        <React.Fragment key={name}>
          <label htmlFor={`coord-${name}`}>{name}</label>
          <input
            id={`coord-${name}`}
            ref={name === "长度" ? lengthRef : null}
            defaultValue={value}
          />
        </React.Fragment>
      ))}
    </CoordForm>
  );
};

const LayoutBar = styled.div`
  display: flex;
  align-items: center;
  height: 22px;
  padding-left: 5px;
  background: linear-gradient(90deg, #dfe3ee, #fff 60%);
`;

const LayoutTab = styled.button`
  position: relative;
  width: 54px;
  height: 20px;
  align-self: flex-start;
  font-size: 11px;
  line-height: 16px;
  padding-bottom: 3px;
  svg {
    position: absolute;
    inset: 0;
  }
  span {
    position: relative;
  }
`;

const Grip = styled.div`
  width: 2px;
  height: 20px;
  margin: 0 2px 0 10px;
  background: repeating-linear-gradient(#8c8f9a 0 2px, transparent 2px 4px);
`;

const ScrollSlot = styled.div`
  flex: 0 1 217px;
  align-self: flex-start;
`;

const ScrollCorner = styled.div`
  width: 16px;
`;

const DrawingArea = () => (
  <Drawing>
    <DrawingRow>
      <Canvas>
        <Sheet width="646" height="328" viewBox="0 0 646 328" fill="none" aria-hidden="true">
          <path d="M157.500 82.500h302v198h-302zM157.500 219.500h302" stroke="#f4f4f4" />
          <path d="M145.500 208.500h58v28h-58zM431.500 212.500h41v24h-41z" stroke="#de1414" strokeWidth="3" />
          <path d="M5 319L114 265" stroke="#de1414" strokeWidth="2" />
          <path d="M134 256l-26 5 6 11z" fill="#de1414" />
        </Sheet>
        <CoordInputs />
        <ChildControls>
          <ChildButton aria-label="最小化图纸">
            <Glyph size={12} box={12}><path d="M1 7.500h10v3H1z" fill="#fff" /></Glyph>
          </ChildButton>
          <ChildButton aria-label="还原图纸">
            <Glyph size={12} box={12}>
              <path d="M5 4V1.500h6v5H8.500M1.500 5.500h5v4h-5z" stroke="#fff" strokeWidth="1.800" />
            </Glyph>
          </ChildButton>
          <ChildButton aria-label="关闭图纸">
            <Glyph size={12} box={12}><path d="M1.500 2l9 8.500M10.500 2l-9 8.500" stroke="#fff" strokeWidth="3" /></Glyph>
          </ChildButton>
        </ChildControls>
        <TranslateButton aria-label="翻译">
          <svg width="24" height="24" viewBox="0 0 24 24" fill="none" aria-hidden="true">
            <rect x="1" y="4" width="13" height="12" fill="#fff" />
            <path d="M4 13l3-6 3 6M5 11h4" stroke="#3b6fc4" strokeWidth="1.500" />
            <rect x="10" y="10" width="14" height="13" fill="#fff" stroke="#4b7fd3" />
            <path d="M14 20l3-7 3 7M15 18h4" stroke="#3b6fc4" strokeWidth="1.700" />
            <path d="M13 3c4-1 6 1 6 4M16.500 5.500L19 8l2.500-3" stroke="#fff" strokeWidth="1.800" />
          </svg>
        </TranslateButton>
      </Canvas>
      <ScrollBar before={134} after={145} />
    </DrawingRow>
    <LayoutBar>
      <LayoutTab>
        <svg width="54" height="20" viewBox="0 0 54 20" aria-hidden="true">
          <path d="M1 0l5 16c1 2 2 2.500 4 2.500h35c2 0 3-.5 4-2.500L53.500 0z" fill="#fff" stroke="#c0c4cf" />
        </svg>
        <span>Model</span>
      </LayoutTab>
      <Spacer />
      <SmallButton aria-label="布局列表"><Icon name="heart" /></SmallButton>
      <Grip />
      <ScrollSlot><ScrollBar across before={78} after={89} /></ScrollSlot>
      <ScrollCorner />
    </LayoutBar>
  </Drawing>
);

/* ---------- command line and status ---------- */

const CommandArea = styled.section`
  padding: 4px 1px 0 0;
`;

const History = styled.div`
  display: flex;
  justify-content: space-between;
  height: 59px;
  border: 1px solid #80838c;
  border-bottom: 0;
  background: #fff;
`;

const Lines = styled.div`
  padding: 1px 2px;
  font-size: 13px;
  line-height: 16px;
`;

const Prompt = styled.div`
  display: flex;
  height: 23px;
  border: 1px solid #77777d;
  border-width: 2px 0 1px;
  background: #fff;
  input {
    flex: 1;
    min-width: 0;
    padding: 0 4px;
    border-left: 1px solid #77777d;
    outline: none;
  }
`;

const Options = styled.div`
  display: flex;
  align-items: center;
  gap: 8px;
  width: 324px;
  padding-left: 8px;
  background: linear-gradient(#b6b9c3, #a6a9b3);
  font-size: 13px;
  line-height: 20px;
  white-space: nowrap;
  a {
    color: #1414cc;
    text-decoration: none;
  }
`;

const OPTIONS = ["X", "Y", "角度", "偏移", "双重偏移", "取消"];

const StatusBar = styled.footer`
  display: grid;
  grid-template-columns: 2fr 3fr 1fr;
  align-items: center;
  height: 20px;
  padding: 0 10px 0 7px;
  background: linear-gradient(#fff, #e8ebf4 50%, #d4d9e7);
  font-size: 11px;
`;

const StatusTools = styled.div`
  display: flex;
  align-items: center;
  gap: 5px;
  padding-left: 78px;
`;

const StatusButton = styled.button`
  display: flex;
`;

const Size = styled.span`
  position: relative;
  z-index: 1;
  text-align: right;
`;

const Watermark = styled.div`
  position: absolute;
  right: 3px;
  bottom: 2px;
  text-align: right;
  pointer-events: none;
  opacity: 0.7;
  font-family: "Noto Sans CJK SC", sans-serif;
  font-weight: 900;
  font-size: 44px;
  line-height: 46px;
  color: #f4f4f8;
  paint-order: stroke fill;
  -webkit-text-stroke: 3px #b4b4b8;
  small {
    display: block;
    font-family: "Liberation Sans", sans-serif;
    font-weight: bold;
    font-size: 12px;
    line-height: 8px;
    -webkit-text-stroke: 2px #b4b4b8;
  }
`;

const Page = styled.div`
  position: relative;
`;

/**
 * The editor window
 * @returns {Component} The component
 */
const App = () => (
  <Page>
    <GlobalStyle />
    <Window>
      <Title />
      <Frame>
        <RibbonTabs />
        <RibbonBar />
        <DocBar>
          <DocTab>
            New2.dxf
            <SmallButton aria-label="关闭 New2.dxf">
              <Glyph>
                <path d="M4.500 4.500l7 7M11.500 4.500l-7 7" stroke="#8a7f68" strokeWidth="3.500" />
                <path d="M4.500 4.500l7 7M11.500 4.500l-7 7" stroke="#fff" strokeWidth="1.600" />
              </Glyph>
            </SmallButton>
          </DocTab>
          <Spacer />
          <SmallButton aria-label="文档列表"><Icon name="heart" /></SmallButton>
        </DocBar>
        <Workspace>
          <SidePanels />
          <DrawingArea />
        </Workspace>
        <CommandArea>
          <Panel title="命令行" end={2} />
          <History>
            <Lines>
              <div>删除P</div>
              <div>标注</div>
            </Lines>
            <ScrollBar before={5} after={2} />
          </History>
          <Prompt>
            <Options>
              <span>长度</span>
              <span>[</span>
              {OPTIONS.map((name, i) => (
                <React.Fragment key={name}>
                  {i > 0 && <span>/</span>}
                  <a href={`#option-${i}`}>{name}</a>
                </React.Fragment>
              ))}
              <span>]</span>
            </Options>
            <input aria-label="命令" />
          </Prompt>
        </CommandArea>
        <StatusBar>
          <span>New2.dxf</span>
          <StatusTools>
            <StatusButton aria-label="对象捕捉"><Icon name="snapDot" /></StatusButton>
            <StatusButton aria-label="栅格"><Icon name="grid" /></StatusButton>
            <StatusButton aria-label="正交"><Icon name="ortho" /></StatusButton>
            <StatusButton aria-label="追踪"><Icon name="track" /></StatusButton>
            <span>(-1.345382; -7.111306; 0)</span>
          </StatusTools>
          <Size>297 x 210 x 0</Size>
        </StatusBar>
      </Frame>
    </Window>
    <Watermark aria-hidden="true">
      下载吧
      <small>www.xiazaiba.com</small>
    </Watermark>
  </Page>
);

export default App;
